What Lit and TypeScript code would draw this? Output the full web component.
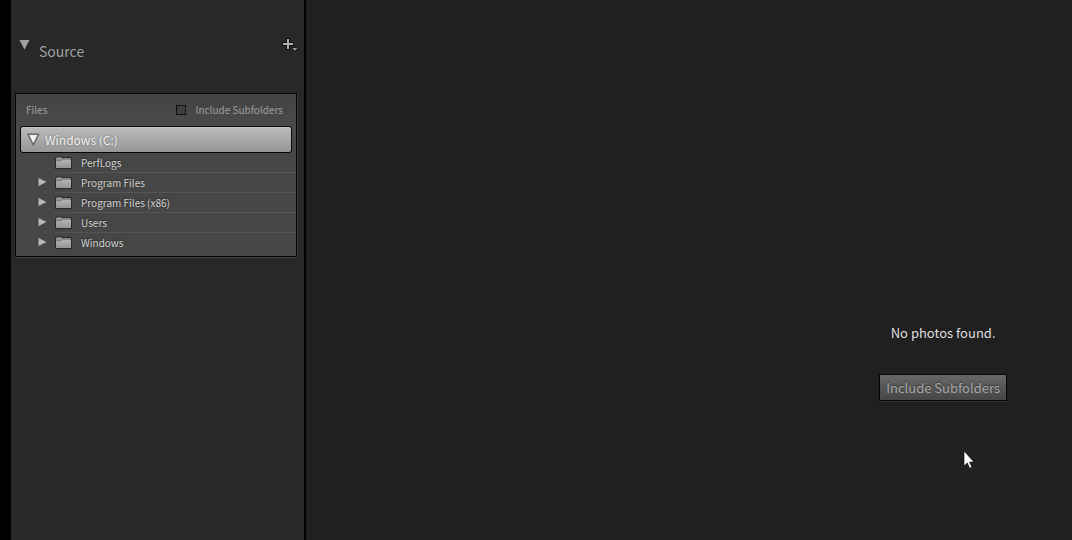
import { LitElement, html, css, svg } from "lit";
import { customElement, property, state } from "lit/decorators.js";

interface Folder {
  name: string;
  expandable: boolean;
}

const FOLDERS: Folder[] = [
  { name: "PerfLogs", expandable: false },
  { name: "Program Files", expandable: true },
  { name: "Program Files (x86)", expandable: true },
  { name: "Users", expandable: true },
  { name: "Windows", expandable: true },
];

const arrowRight = svg`<path d="M0.5 0 L8.5 4 L0.5 8 Z" fill="#b9b9b9"/>`;

@customElement("folder-row")
export class FolderRow extends LitElement {
  @property({ attribute: false }) folder!: Folder;

  static styles = css`
    :host {
      display: block;
    }
    .row {
      display: flex;
      align-items: stretch;
      height: 20px;
      padding-left: 22px;
    }
    .toggle {
      display: flex;
      align-items: center;
      width: 17px;
      padding: 0;
      border: 0;
      background: none;
    }
    .spacer {
      width: 17px;
    }
    .name {
      flex: 1;
      display: flex;
      align-items: center;
      gap: 9px;
      padding: 0;
      border: 0;
      border-bottom: 1px solid #555555;
      background: none;
      color: #d2d2d2;
      font: 10px/18px "Noto Sans CJK SC", "Open Sans", sans-serif;
      text-align: left;
      text-shadow: 0 -1px 1px #2c2c2c;
    }
    :host(:last-child) .name {
      border-bottom-color: transparent;
    }
    svg {
      display: block;
      flex: none;
    }
  `;

  render() {
    const { name, expandable } = this.folder;
    return html`
      <div class="row">
        ${expandable
          ? html`<button class="toggle" aria-label="Expand ${name}">
              <svg width="9" height="10" viewBox="0 0 9 10">${arrowRight}</svg>
            </button>`
          : html`<span class="spacer"></span>`}
        <button class="name">
          <svg width="17" height="13" viewBox="0 0 17 13">
            <defs>
              <linearGradient id="f" x1="0" y1="0" x2="0" y2="1">
                <stop offset="0" stop-color="#b4b4b4" />
                <stop offset="1" stop-color="#949494" />
              </linearGradient>
            </defs>
            <path d="M0 2.5 L1.5 0.5 H6.5 L7.5 1 H15.5 L17 2 V13 H0 Z" fill="#292929" />
            <path d="M1 2.5 L2 1.3 H6 L7 2 H15 L16 3 V12 H1 Z" fill="#949494" />
            <path d="M1 5 H6 L8 3.5 H16 V12 H1 Z" fill="url(#f)" />
            <path d="M1 4.7 H6 L8 3.2 H16" fill="none" stroke="#6c6c6c" stroke-width="0.7" />
          </svg>
          <span>${name}</span>
        </button>
      </div>
    `;
  }
}

@customElement("source-panel")
export class SourcePanel extends LitElement {
  @state() private subfolders = false;

  static styles = css`
    :host {
      display: block;
      color: #a0a0a0;
      font-family: "Noto Sans CJK SC", "Open Sans", sans-serif;
    }
    .head {
      display: flex;
      align-items: flex-start;
      height: 56px;
      padding: 37px 6px 0 8px;
    }
    svg {
      display: block;
      flex: none;
    }
    button {
      padding: 0;
      border: 0;
      background: none;
      font-family: inherit;
    }
    .title {
      flex: 1;
      margin: 4px 0 0 9px;
      font-size: 14px;
      font-weight: 400;
      line-height: 20px;
    }
    .card {
      margin: 0 7px 0 4px;
      border: 1px solid #060606;
      background: linear-gradient(#424242, #4a4a4a 28px, #464646 60px, #464646);
      box-shadow: 0 1px 0 #404040, 1px 0 0 #353535;
      padding-bottom: 3px;
    }
    .options {
      display: flex;
      align-items: center;
      justify-content: space-between;
      height: 32px;
      padding: 0 13px 0 10px;
      font-size: 10px;
      line-height: 16px;
    }
    .check {
      display: flex;
      align-items: center;
      gap: 9px;
    }
    .check input {
      appearance: none;
      width: 10px;
      height: 10px;
      margin: 0;
      border: 1px solid #101010;
      background: #404040;
    }
    .check input:checked {
      background: #b0b0b0;
    }
    .volume {
      display: flex;
      align-items: center;
      gap: 5px;
      width: calc(100% - 8px);
      height: 27px;
      margin: 0 4px;
      padding: 0 6px;
      border: 1px solid #080808;
      border-radius: 3px;
      background: linear-gradient(#bcbcbc, #969696);
      box-shadow: inset 0 1px 0 #c9c9c9;
      color: #f2f2f2;
      font-size: 12px;
      line-height: 18px;
      text-shadow: 0 0 2px #6a6a6a;
    }
  `;

  render() {
    return html`
      <div class="head">
        <button aria-label="Collapse Source">
          <svg width="11" height="13" viewBox="0 0 11 13">
            <path d="M0.5 3 H10.5 L5.5 12.5 Z" fill="#a0a0a0" />
          </svg>
        </button>
        <h2 class="title">Source</h2>
        <button aria-label="Add source">
          <svg width="17" height="15" viewBox="0 0 17 15">
            <path d="M7 1 V13 M1 7 H13" stroke="#101010" stroke-width="4" />
            <path d="M7 2 V12 M2 7 H12" stroke="#b0b0b0" stroke-width="2" />
            <path d="M11 10.5 H16.5 V12 L13.8 14.5 L11 12 Z" fill="#101010" />
            <path d="M11.3 11 H16.3 L13.8 13.8 Z" fill="#a0a0a0" />
          </svg>
        </button>
      </div>
      <section class="card">
        <div class="options">
          <span>Files</span>
          <label class="check">
            <input
              type="checkbox"
              .checked=${this.subfolders}
              @change=${(e: Event) => (this.subfolders = (e.target as HTMLInputElement).checked)}
            />
            Include Subfolders
          </label>
        </div>
        <button class="volume" aria-expanded="true">
          <svg width="13" height="13" viewBox="0 0 13 13">
            <path d="M1 1.2 H11.6 L6.3 12 Z" fill="#f2f2f2" stroke="#686868" stroke-width="1.5" stroke-linejoin="round" />
          </svg>
          <span>Windows (C:)</span>
        </button>
        <div>${FOLDERS.map((f) => html`<folder-row .folder=${f}></folder-row>`)}</div>
      </section>
    `;
  }
}

@customElement("app-root")
export class AppRoot extends LitElement {
  static styles = css`
    :host {
      display: flex;
      position: relative;
      min-height: 100vh;
      overflow: hidden;
      background: #202020;
      font-family: "Noto Sans CJK SC", "Open Sans", sans-serif;
    }
    .side {
      box-sizing: border-box;
      width: 306px;
      flex: none;
      border-left: 11px solid #000000;
      border-right: 2px solid #000000;
      background: #282828;
    }
    .main {
      flex: 1;
      display: flex;
      justify-content: flex-end;
      align-items: flex-start;
      padding: 323px 65px 0 0;
    }
    .empty {
      display: flex;
      flex-direction: column;
      align-items: center;
      gap: 31px;
    }
    .message {
      margin: 0;
      color: #dedede;
      font-size: 13px;
      line-height: 20px;
    }
    .action {
      height: 27px;
      padding: 0 6px;
      border: 1px solid #060606;
      background: linear-gradient(#686868, #454545);
      box-shadow: 0 1px 0 #303030;
      color: #a6a6a6;
      font: 13px/20px "Noto Sans CJK SC", "Open Sans", sans-serif;
      text-shadow: 0 -1px 1px #3a3a3a;
    }
    .pointer {
      position: absolute;
      left: 963px;
      top: 450px;
      pointer-events: none;
    }
  `;

  render() {
    return html`
      <aside class="side"><source-panel></source-panel></aside>
      <main class="main">
        <div class="empty">
          <p class="message">No photos found.</p>
          <button class="action">Include Subfolders</button>
        </div>
      </main>
      <svg class="pointer" width="12" height="20" viewBox="0 0 12 20" aria-hidden="true">
        <path
          d="M1 1 V16 L4.3 12.9 L6.7 18.3 L8.9 17.3 L6.6 12 H11 Z"
          fill="#ffffff"
          stroke="#000000"
          stroke-width="0.6"
        />
      </svg>
    `;
  }
}
